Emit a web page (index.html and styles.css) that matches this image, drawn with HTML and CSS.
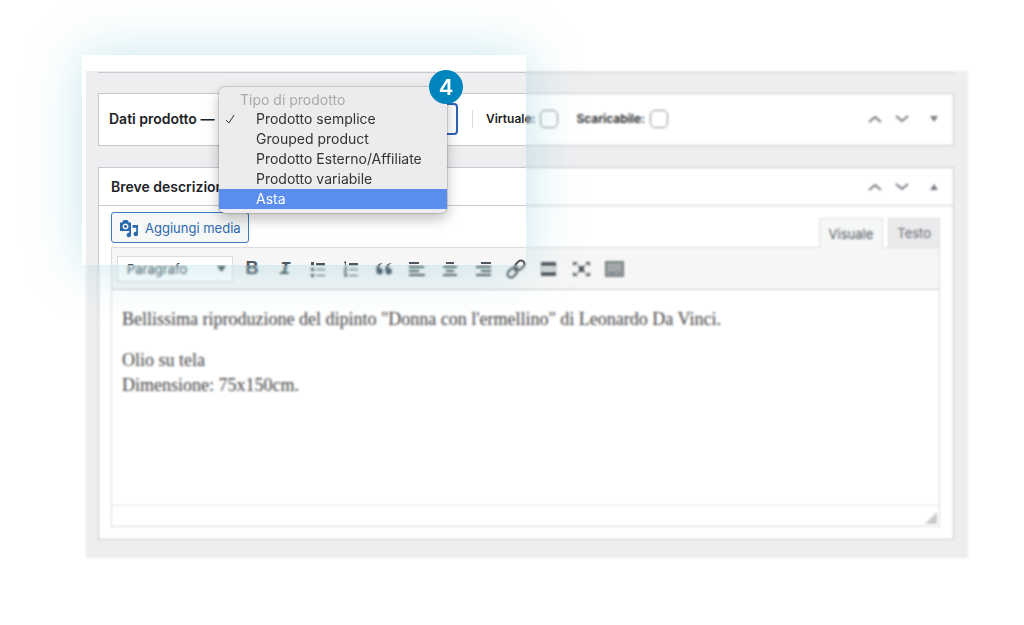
FILE: index.html
```html
<!DOCTYPE html>
<html lang="it">

<head>
  <meta charset="utf-8">
  <title>Dati prodotto</title>
  <meta name="viewport" content="width=device-width, initial-scale=1.0">
  <link rel="stylesheet" href="styles.css">
</head>

<body>
  <main class="panel">
    <div class="rule"></div>

    <!-- Product data -->
    <section class="postbox product">
      <h2><label for="product-type">Dati prodotto —</label></h2>
      <div class="type">
        <select id="product-type" class="type-select">
          <option value="" selected></option>
          <option>Prodotto semplice</option>
          <option>Grouped product</option>
          <option>Prodotto Esterno/Affiliate</option>
          <option>Prodotto variabile</option>
          <option>Asta</option>
        </select>
        <div class="menu">
          <p class="menu-title">Tipo di prodotto</p>
          <button type="button" class="menu-item">
            <svg class="tick" viewBox="0 0 12 12"><path d="M2 7l3 3 5-8" /></svg>
            Prodotto semplice
          </button>
          <button type="button" class="menu-item">Grouped product</button>
          <button type="button" class="menu-item">Prodotto Esterno/Affiliate</button>
          <button type="button" class="menu-item">Prodotto variabile</button>
          <button type="button" class="menu-item active">Asta</button>
        </div>
        <span class="step">4</span>
      </div>
      <div class="flags">
        <label>Virtuale: <input type="checkbox"></label>
        <label>Scaricabile: <input type="checkbox"></label>
      </div>
      <div class="handles">
        <button type="button" aria-label="Sposta su"><svg viewBox="0 0 20 20"><path class="chevron" d="M4 13l6-5 6 5" /></svg></button>
        <button type="button" aria-label="Sposta giù"><svg viewBox="0 0 20 20"><path class="chevron" d="M4 7l6 5 6-5" /></svg></button>
        <button type="button" aria-label="Apri"><svg viewBox="0 0 20 20"><path d="M6 7h8l-4 6z" /></svg></button>
      </div>
    </section>

    <!-- Short description -->
    <section class="postbox">
      <header class="postbox-head">
        <h2>Breve descrizione</h2>
        <div class="handles">
          <button type="button" aria-label="Sposta su"><svg viewBox="0 0 20 20"><path class="chevron" d="M4 13l6-5 6 5" /></svg></button>
          <button type="button" aria-label="Sposta giù"><svg viewBox="0 0 20 20"><path class="chevron" d="M4 7l6 5 6-5" /></svg></button>
          <button type="button" aria-label="Chiudi"><svg viewBox="0 0 20 20"><path d="M6 13h8l-4-6z" /></svg></button>
        </div>
      </header>

      <div class="inside">
        <div class="editor-tools">
          <button type="button" class="media">
            <svg viewBox="0 0 20 20">
              <path fill-rule="evenodd" d="M1 4.500h2L4.500 2h4L10 4.500h2v8.500H1zM6.500 5.500a3 3 0 1 0 .01 0zM6.500 7a1.500 1.500 0 1 1-.01 0z" />
              <path d="M13.500 7H19v9a2.200 2.200 0 1 1-1.800-2.200V9.800h-3.700zM12 10.500v6.500a2.200 2.200 0 1 1-1.800-2.200v-4.300z" />
            </svg>
            Aggiungi media
          </button>
          <div class="tabs">
            <button type="button" class="tab current">Visuale</button>
            <button type="button" class="tab">Testo</button>
          </div>
        </div>

        <div class="editor">
          <div class="toolbar">
            <div class="format">
              <select aria-label="Formato">
                <option>Paragrafo</option>
              </select>
              <svg viewBox="0 0 10 10"><path d="M0 2h10L5 9z" /></svg>
            </div>
            <button type="button" class="bold">B</button>
            <button type="button" class="italic">I</button>
            <button type="button" aria-label="Elenco puntato">
              <svg viewBox="0 0 20 20"><path d="M3 3h3v3H3zM3 9h3v3H3zM3 15h3v3H3zM8 4h9v2H8zM8 10h9v1H8zM8 16h9v1H8z" /></svg>
            </button>
            <button type="button" aria-label="Elenco numerato">
              <svg viewBox="0 0 20 20"><path d="M3 3l2-1v5H4V4H3zM3 8h3v3H4v1h2v1H3v-3h2V9H3zM3 14h3v4H3v-1h2v-1H3v-1h2H3zM8 4h9v2H8zM8 10h9v1H8zM8 16h9v1H8z" /></svg>
            </button>
            <button type="button" aria-label="Citazione">
              <svg viewBox="0 0 20 20"><path d="M9 4C6 4.500 5 7 5.500 9a3.200 3.200 0 1 1-3 3.500C1.500 8 4 3.500 9 4zM18 4c-3 .5-4 3-3.500 5a3.200 3.200 0 1 1-3 3.500C10.500 8 13 3.500 18 4z" /></svg>
            </button>
            <button type="button" aria-label="Allinea a sinistra">
              <svg viewBox="0 0 20 20"><path d="M2 3h10v2H2zM2 7h15v2H2zM2 11h10v2H2zM2 15h16v2H2z" /></svg>
            </button>
            <button type="button" aria-label="Allinea al centro">
              <svg viewBox="0 0 20 20"><path d="M6 3h8v2H6zM3 7h14v2H3zM6 11h8v2H6zM3 15h14v2H3z" /></svg>
            </button>
            <button type="button" aria-label="Allinea a destra">
              <svg viewBox="0 0 20 20"><path d="M8 3h10v2H8zM3 7h15v2H3zM8 11h10v2H8zM3 15h15v2H3z" /></svg>
            </button>
            <button type="button" aria-label="Link">
              <svg viewBox="0 0 20 20"><g class="link" transform="rotate(-45 10 10)"><rect x="-.5" y="6.500" width="10.500" height="7" rx="3.500" /><rect x="10" y="6.500" width="10.500" height="7" rx="3.500" /><path d="M7 10h6" /></g></svg>
            </button>
            <button type="button" aria-label="Leggi tutto">
              <svg viewBox="0 0 20 20"><path d="M2 3h15v4H2zM2 13h15v4H2z" /><path class="pale" d="M2 7h1v6H2zM16 7h1v6h-1zM4 9h3v2H4zM8 9h3v2H8zM12 9h3v2h-3z" /></svg>
            </button>
            <button type="button" aria-label="Schermo intero">
              <svg viewBox="0 0 20 20"><path d="M1 3h5L1 7zM18 3h-5l5 4zM1 17h5l-5-4zM18 17h-5l5-4zM7 7h5v6H7z" /><path class="cross" d="M3 4l13 12M16 4L3 16" /></svg>
            </button>
            <button type="button" aria-label="Barra degli strumenti">
              <svg viewBox="0 0 20 20"><path class="pale" d="M0 2h19v16H0z" /><path class="pale" d="M0 2h19v2H0zM0 16h19v2H0zM0 4h2v12H0zM17 4h2v12h-2zM4 13h7v2H4zM13 12h2v3h-2z" /></svg>
            </button>
          </div>
          <div class="content" contenteditable="true" role="textbox" spellcheck="false">
            <p>Bellissima riproduzione del dipinto "Donna con l'ermellino" di Leonardo Da Vinci.</p>
            <p>Olio su tela<br>Dimensione: 75x150cm.</p>
          </div>
          <div class="statusbar">
            <svg viewBox="0 0 12 12"><path d="M12 0v12H0z" /></svg>
          </div>
        </div>
      </div>
    </section>

    <!-- everything outside the spotlight is out of focus -->
    <div class="veil"></div>
    <div class="spotlight"></div>
  </main>
</body>

</html>
```

FILE: styles.css
```css
* {
  box-sizing: border-box;
}

body {
  margin: 0;
  padding: 71px 56px 66px 86px;
  background: #fff;
  color: #1d2327;
  font-family: Inter, "Liberation Sans", sans-serif;
  font-size: 13px;
}

h2,
p {
  margin: 0;
}

button,
select {
  font: inherit;
  color: inherit;
}

button {
  padding: 0;
  border: none;
  background: none;
  cursor: pointer;
}

svg {
  display: block;
  fill: currentColor;
}

/* ------------------------------- PANEL ------------------------------- */

.panel {
  position: relative;
  padding: 0 14px 18px 12px;
  background: #eeeef0;
}

.rule {
  height: 2px;
  margin-bottom: 20px;
  border-bottom: 1px solid #c8c9cc;
}

.postbox {
  border: 1px solid #c8c9cc;
  background: #fff;
}

.postbox h2 {
  font-size: 14px;
  font-weight: 600;
  white-space: nowrap;
}

.postbox-head {
  display: flex;
  justify-content: space-between;
  align-items: center;
  height: 38px;
  padding: 0 9px 0 12px;
  border-bottom: 1px solid #c8c9cc;
}

.handles {
  display: flex;
  gap: 7px;
  margin-left: auto;
  color: #787c82;
}

.handles svg {
  width: 20px;
  height: 20px;
}

.handles button:last-child {
  margin-left: 5px;
}

.chevron {
  fill: none;
  stroke: currentColor;
  stroke-width: 2;
}

/* ---------------------------- PRODUCT DATA --------------------------- */

.product {
  display: flex;
  align-items: center;
  height: 53px;
  margin-bottom: 21px;
  padding: 0 9px 2px 10px;
}

.product h2 {
  width: 110px;
}

.type {
  position: relative;
  width: 239px;
}

.type-select {
  display: block;
  width: 100%;
  height: 32px;
  padding: 0 8px;
  appearance: none;
  border: 2px solid #2f62b5;
  border-radius: 4px;
  background: #fff;
}

.menu {
  position: absolute;
  z-index: 2;
  top: -16px;
  left: 0;
  width: 228px;
  padding: 3px 0 4px;
  border-radius: 6px;
  background: #ececee;
  box-shadow: 0 0 1px 1px rgba(0, 0, 0, .15), 0 6px 14px rgba(0, 0, 0, .25);
  color: #333;
  font-size: 14px;
  line-height: 20px;
}

.menu-title {
  padding-left: 21px;
  color: #aaaaac;
  line-height: 19px;
}

.menu-item {
  display: block;
  position: relative;
  width: 100%;
  padding-left: 37px;
  text-align: left;
  white-space: nowrap;
}

.menu-item.active {
  background: #5b8def;
  color: #fff;
}

.tick {
  position: absolute;
  top: 4px;
  left: 5px;
  width: 12px;
  height: 12px;
  fill: none;
  stroke: currentColor;
  stroke-width: 1;
}

.step {
  position: absolute;
  z-index: 3;
  top: -33px;
  right: -5px;
  width: 34px;
  height: 34px;
  border-radius: 50%;
  background: #0085be;
  color: #fff;
  font-size: 22px;
  font-weight: 600;
  line-height: 34px;
  text-align: center;
}

.flags {
  display: flex;
  gap: 18px;
  margin-left: 14px;
  padding-left: 13px;
  border-left: 1px solid #dcdcde;
  font-size: 12px;
  font-weight: 600;
}

.flags label {
  display: flex;
  align-items: center;
  gap: 5px;
}

.flags input {
  width: 18px;
  height: 18px;
  margin: 0;
  appearance: none;
  border: 1px solid #8c8f94;
  border-radius: 5px;
  background: #fff;
}

/* ------------------------------- EDITOR ------------------------------ */

.inside {
  padding: 6px 13px 12px 12px;
}

.editor-tools {
  display: flex;
  justify-content: space-between;
  align-items: flex-start;
}

.media {
  display: flex;
  align-items: center;
  gap: 6px;
  height: 31px;
  margin-bottom: 4px;
  padding: 0 7px;
  border: 1px solid #3c7cc4;
  border-radius: 3px;
  background: #f6f7f7;
  color: #2c68ae;
  white-space: nowrap;
}

.media svg {
  width: 20px;
  height: 20px;
}

.tabs {
  display: flex;
  gap: 5px;
  align-self: flex-end;
}

.tab {
  height: 29px;
  padding: 0 8px;
  border: 1px solid #dcdcde;
  border-bottom: none;
  background: #ebebed;
  color: #646970;
}

.tab.current {
  position: relative;
  height: 30px;
  padding: 0 9px;
  margin-bottom: -1px;
  background: #f6f7f7;
  color: #50575e;
}

.editor {
  border: 1px solid #dcdcde;
}

.toolbar {
  display: flex;
  align-items: center;
  gap: 5px;
  height: 42px;
  padding: 0 5px;
  border-bottom: 1px solid #c8c9cc;
  background: #f6f6f6;
  color: #50575e;
}

.format {
  display: flex;
  align-items: center;
  width: 116px;
  height: 26px;
  padding-right: 6px;
  border: 1px solid #dcdcde;
  background: #fff;
}

.format select {
  flex: 1;
  min-width: 0;
  padding: 0 9px;
  appearance: none;
  border: none;
  background: none;
}

.format svg {
  width: 9px;
  height: 9px;
}

.toolbar button {
  display: flex;
  justify-content: center;
  align-items: center;
  width: 28px;
  height: 28px;
}

.toolbar button svg {
  width: 20px;
  height: 20px;
}

.toolbar .bold {
  font: bold 18px "Liberation Sans", sans-serif;
}

.toolbar .italic {
  font: italic bold 19px "Liberation Mono", monospace;
}

.link,
.cross {
  fill: none;
  stroke: currentColor;
  stroke-width: 2;
}

.cross {
  stroke-width: 1;
}

.pale {
  opacity: .5;
}

.content {
  min-height: 215px;
  padding: 17px 10px;
  color: #444;
  font-family: Georgia, "Liberation Serif", serif;
  font-size: 18px;
  line-height: 25px;
  outline: none;
}

.content p + p {
  margin-top: 16px;
}

.statusbar {
  display: flex;
  justify-content: flex-end;
  align-items: flex-end;
  height: 21px;
  padding: 2px;
  border-top: 1px solid #e2e2e4;
  color: #c8cacc;
}

.statusbar svg {
  width: 12px;
  height: 12px;
}

/* ----------------------------- SPOTLIGHT ----------------------------- */

.veil {
  position: absolute;
  inset: -16px;
  backdrop-filter: blur(1px);
  clip-path: polygon(456px 0, 100% 0, 100% 100%, 0 100%, 0 210px, 456px 210px);
  pointer-events: none;
}

.spotlight {
  position: absolute;
  top: -16px;
  left: -4px;
  width: 444px;
  height: 210px;
  box-shadow: 0 0 50px rgba(110, 195, 212, .4);
  pointer-events: none;
}
```
